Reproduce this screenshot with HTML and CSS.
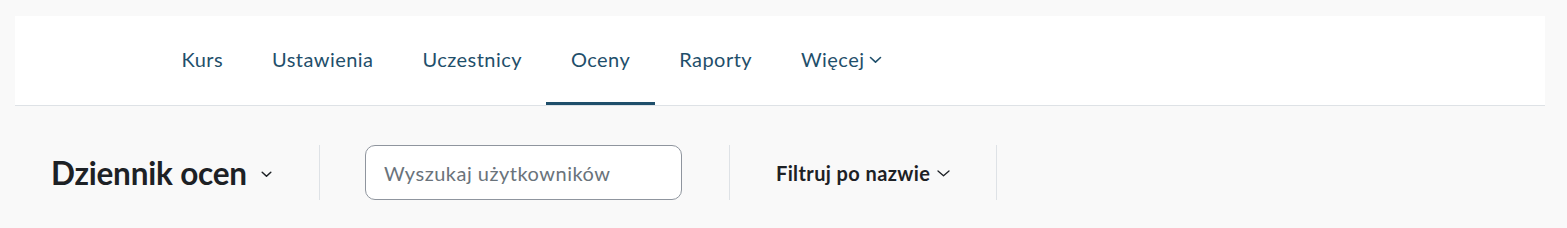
FILE: index.html
```html
<!DOCTYPE html>
<html lang="pl">
<head>
<meta charset="utf-8">
<title>Dziennik ocen</title>
<link rel="stylesheet" href="styles.css">
</head>
<body>
<div class="page">
  <nav class="navcard">
    <a class="navitem">Kurs</a>
    <a class="navitem">Ustawienia</a>
    <a class="navitem">Uczestnicy</a>
    <a class="navitem active">Oceny</a>
    <a class="navitem">Raporty</a>
    <a class="navitem">Więcej
      <svg class="chev-nav" width="13" height="8" viewBox="0 0 13 8"><path d="M1.5 1.5 L6.5 6.2 L11.5 1.5" fill="none" stroke="currentColor" stroke-width="1.6" stroke-linecap="round" stroke-linejoin="round"/></svg>
    </a>
  </nav>
  <div class="toolbar">
    <div class="tool tool-first">
      <h2 class="title">Dziennik ocen</h2>
      <svg class="chev-title" width="11" height="7" viewBox="0 0 11 7"><path d="M1.2 1.2 L5.5 5.3 L9.8 1.2" fill="none" stroke="#1d2125" stroke-width="1.5" stroke-linecap="round" stroke-linejoin="round"/></svg>
    </div>
    <div class="tool tool-search">
      <div class="search">Wyszukaj użytkowników</div>
    </div>
    <div class="tool tool-filter">
      <span class="filter">Filtruj po nazwie</span>
      <svg class="chev-filter" width="13" height="7" viewBox="0 0 13 7"><path d="M1 1 L6.5 5.8 L12 1" fill="none" stroke="#1d2125" stroke-width="1.3" stroke-linecap="round" stroke-linejoin="round"/></svg>
    </div>
  </div>
</div>
</body>
</html>
```

FILE: styles.css
```css
html, body {
  margin: 0;
  padding: 0;
}
body {
  background: #f9f9f9;
  font-family: "Lato", "Liberation Sans", sans-serif;
  color: #1d2125;
}
.page {
  padding: 16px 22px 0 15px;
}
.navcard {
  display: flex;
  height: 89px;
  background: #ffffff;
  border-bottom: 1px solid #dee2e6;
  padding-left: 142px;
}
.navitem {
  display: flex;
  align-items: center;
  gap: 5px;
  padding: 0 24.5px;
  height: 86px;
  border-bottom: 3px solid transparent;
  color: #1f4f6b;
  font-size: 20px;
  letter-spacing: 0.45px;
  text-decoration: none;
}
.navitem.active {
  border-bottom-color: #1f4f6b;
}
.chev-nav {
  margin-top: 2px;
}
.toolbar {
  display: flex;
  align-items: stretch;
  padding: 39px 0 0 36px;
}
.tool {
  display: flex;
  align-items: center;
  height: 55px;
  padding: 0 46px;
  border-right: 1px solid #dee2e6;
}
.tool-first {
  padding-left: 0;
  padding-right: 47px;
}
.tool-search {
  padding-left: 45px;
  padding-right: 47px;
}
.tool-filter {
  padding-left: 46px;
}
.title {
  margin: 0;
  font-size: 31.5px;
  font-weight: 700;
  color: #1d2125;
  letter-spacing: -0.2px;
}
.chev-title {
  margin-left: 14px;
  margin-top: 3px;
}
.search {
  box-sizing: border-box;
  width: 317px;
  height: 55px;
  border: 1px solid #8f959e;
  border-radius: 10px;
  background: #ffffff;
  padding: 0 18px;
  display: flex;
  align-items: center;
  font-size: 20px;
  letter-spacing: 0.5px;
  color: #6a737b;
}
.filter {
  font-size: 20px;
  font-weight: 700;
  letter-spacing: 0.4px;
  color: #1d2125;
}
.chev-filter {
  margin-left: 7px;
  margin-top: 2px;
}
```
